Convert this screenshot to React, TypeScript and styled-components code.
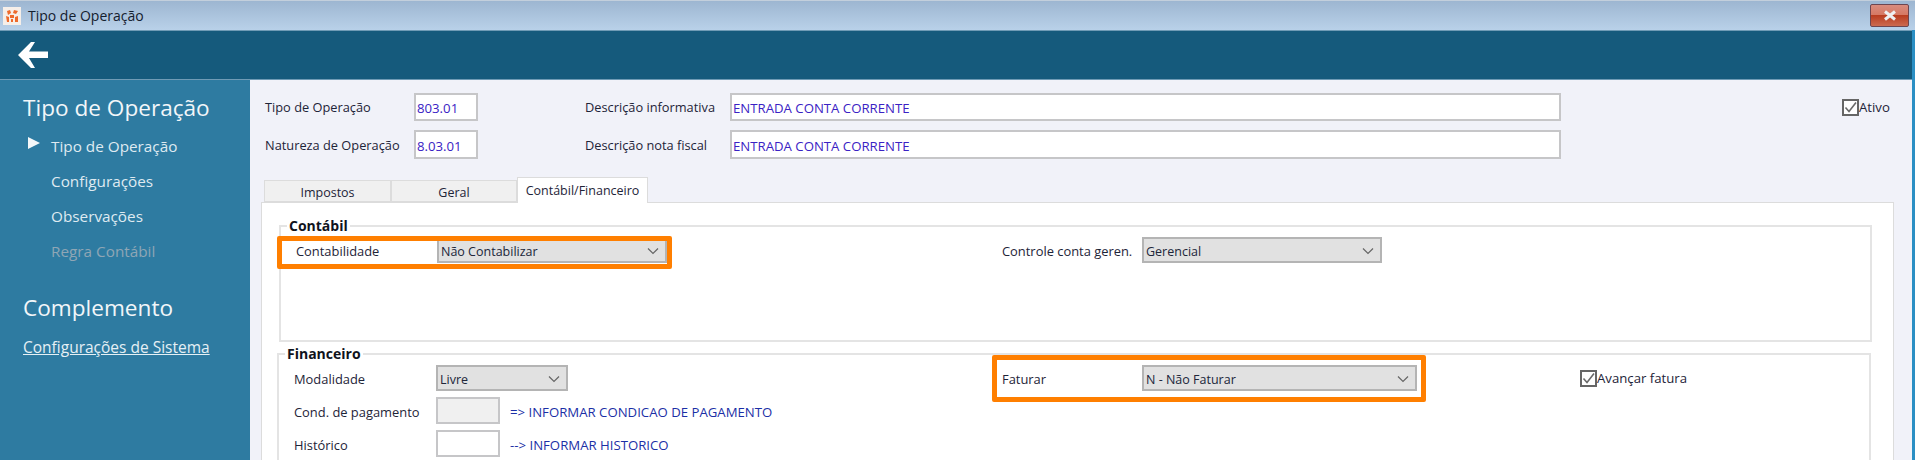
import React from "react";
import styled, { createGlobalStyle } from "styled-components";

const Global = createGlobalStyle`
  html, body { margin: 0; padding: 0; height: 100%; overflow: hidden; background: #b7cfe6; }
  * { box-sizing: border-box; }
  body { font-family: "Open Sans", "Noto Sans", "Liberation Sans", sans-serif; font-size: 13px; color: #1e2438; }
`;

const Window = styled.div`
  position: relative; width: 1915px; height: 460px; display: flex; flex-direction: column; overflow: hidden;
  background: linear-gradient(#9cb5d0, #b9d1e9 30px, #2b8fc4 30px, #2b8fc4 100%);
`;
const TitleBar = styled.header`
  height: 30px; display: flex; align-items: center; padding: 0 6px 0 3px; gap: 7px; flex: none;
  border-top: 1px solid #c3cfdc;
`;
const TitleText = styled.span`font-size: 14px; color: #14202e; flex: 1;`;
const AppLogo = styled.svg`width: 18px; height: 18px; flex: none; margin-top: 1px;`;
const CloseButton = styled.button`
  width: 39px; height: 23px; padding: 0; display: flex; align-items: center; justify-content: center;
  border: 1px solid #6d4650; border-radius: 2px;
  background: linear-gradient(#d98c7e, #d67964 46%, #b93d20 50%, #cc6a4f);
`;
const Frame = styled.div`
  flex: 1; min-height: 0; margin-right: 3px; display: flex; flex-direction: column;
`;
const Toolbar = styled.div`
  height: 50px; flex: none; background: #155a7c; display: flex; align-items: center; padding-left: 18px;
  border-top: 1px solid #6f9bb5; border-bottom: 1px solid #6f9bb5;
`;
const Body = styled.div`flex: 1; min-height: 0; display: flex;`;
const Sidebar = styled.nav`
  width: 250px; flex: none; background: #2e7ba1; padding: 12px 0 0 23px; color: #e4eef4;
`;
const SideTitle = styled.h2<{ $top?: number }>`
  margin: ${p => p.$top ?? 0}px 0 0; font-size: 22.6px; font-weight: 400; line-height: 32px; color: #f2f6f9;
`;
const SideItem = styled.div<{ $muted?: boolean }>`
  position: relative; height: 35px; display: flex; align-items: center; padding-left: 28px; font-size: 15.3px;
  color: ${p => (p.$muted ? "#8fa6b5" : "#dfeaf1")};
`;
const Marker = styled.span`
  position: absolute; left: 5px; top: 9px; width: 0; height: 0;
  border-left: 12px solid #f4f7f9; border-top: 6px solid transparent; border-bottom: 6px solid transparent;
`;
const SideItems = styled.div`margin-top: 4px;`;
const SideLink = styled.a`
  display: inline-block; margin-top: 12px; font-size: 15.5px; color: #e6f0f5; text-decoration: underline;
`;
const Content = styled.main`
  flex: 1; min-width: 0; background: #f1f2f9; padding: 13px 0 0 11px; overflow: hidden;
`;
const HeadGrid = styled.div`
  display: grid; grid-template-columns: 149px 64px 252px 831px 281px auto;
  grid-template-rows: 28px 29px; row-gap: 9px; align-items: center; padding-left: 4px;
`;
const HeadLabel = styled.label<{ $indent?: boolean }>`
  font-size: 12.8px; padding-left: ${p => (p.$indent ? "107px" : "0")}; white-space: nowrap;
`;
const TextBox = styled.div<{ $fill?: string }>`
  height: 100%; display: flex; align-items: center; padding: 2px 0 0 1px; font-size: 13.2px; color: #3a22c4;
  background: ${p => p.$fill ?? "#fff"}; border: 2px solid #c6c6c8; white-space: nowrap;
`;
const Check = styled.label`display: flex; align-items: center; gap: 0; font-size: 13.2px; white-space: nowrap;`;
const CheckBox = styled.span`
  width: 17px; height: 17px; display: flex; align-items: center; justify-content: center; background: #fff;
  border: 2px solid #666;
`;
const Tabs = styled.div`display: flex; align-items: flex-end; height: 25px; margin-top: 18px; padding-left: 3px;`;
const Tab = styled.div<{ $active?: boolean; $w: number }>`
  width: ${p => p.$w}px; height: ${p => (p.$active ? "26px" : "22px")}; display: flex; align-items: center; justify-content: center;
  padding-top: ${p => (p.$active ? "0" : "3px")};
  font-size: 12.5px; background: ${p => (p.$active ? "#fff" : "#f0f0f0")}; border: 1px solid #dcdcdc;
  border-bottom: ${p => (p.$active ? "none" : "1px solid #dcdcdc")}; margin-bottom: ${p => (p.$active ? "-1px" : "0")};
  position: relative; z-index: ${p => (p.$active ? 1 : 0)};
`;
const Panel = styled.div`
  position: relative; width: 1633px; height: 300px; background: #fff; border: 1px solid #dcdcdc;
  padding: 14px 0 0 15px;
`;
const Group = styled.fieldset<{ $h: number; $w: number; $shift?: number; $mt?: number }>`
  margin: ${p => p.$mt ?? 0}px 0 0 ${p => p.$shift ?? 0}px; padding: 0 0 0 15px; min-width: 0; width: ${p => p.$w}px; height: ${p => p.$h}px;
  border: 2px solid #e4e4e4;
`;
const Legend = styled.legend`
  margin-left: -9px; padding: 0 2px; font-size: 14px; font-weight: 700; line-height: 17px; color: #10131c;
`;
const AccountingGrid = styled.div`
  display: grid; grid-template-columns: 141px 230px 335px 140px 240px; grid-template-rows: 26px; align-items: center; margin-top: 3px;
`;
const FinanceGrid = styled.div`
  display: grid; grid-template-columns: 142px 132px 434px 140px 275px 163px auto;
  grid-template-rows: 26px 27px 27px; row-gap: 6px; align-items: center; margin-top: 3px;
`;
const Label = styled.label`font-size: 12.9px; white-space: nowrap; margin-top: 2px;`;
const SelectBox = styled.div`
  height: 100%; display: flex; align-items: center; justify-content: space-between; padding: 2px 6px 0 2px;
  font-size: 12.5px; color: #20263a; background: #e1e1e1; border: 2px solid #b4b4b4; white-space: nowrap;
`;
const EmptySlot = styled.span``;
const NoteCell = styled.div`grid-column: 2 / -1; height: 100%; display: flex; align-items: center; gap: 10px;`;
const SmallBox = styled(TextBox)`width: 64px; flex: none;`;
const Note = styled.span`font-size: 13.2px; color: #1b2fa6; white-space: nowrap; padding-top: 2px;`;
const Highlight = styled.div<{ $x: number; $y: number; $w: number; $h: number }>`
  position: absolute; left: ${p => p.$x}px; top: ${p => p.$y}px; width: ${p => p.$w}px; height: ${p => p.$h}px;
  border: 5px solid #ff7f00; border-radius: 2px; pointer-events: none;
`;

const Chevron = () => (
  <svg width="12" height="8" viewBox="0 0 12 8" fill="none"><path d="M1 1.5 6 6.5 11 1.5" stroke="#666" strokeWidth="1.2" /></svg>
);
const Tick = () => (
  <svg width="13" height="13" viewBox="0 0 13 13" fill="none"><path d="M1.5 6.5 5 10.5 12 1.5" stroke="#6a6a6a" strokeWidth="1.6" /></svg>
);

export default function App() {
  return (
    <>
      <Global />
      <Window>
        <TitleBar>
          <AppLogo viewBox="0 0 18 18">
            <rect width="18" height="18" fill="#f6efe9" />
            <path d="M4 4 7 3 8 6 5 8ZM11 3 15 4 13 7 10 6ZM7 8 11 8 11 11 7 11ZM3 9 6 10 6 15 4 15ZM12 10 15 9 15 15 12 15ZM8 12 10 12 10 15 8 15Z" fill="#ee6a2c" />
          </AppLogo>
          <TitleText>Tipo de Operação</TitleText>
          <CloseButton aria-label="Fechar">
            <svg width="14" height="11" viewBox="0 0 14 11"><path d="M2 1.5 12 9.5M12 1.5 2 9.5" stroke="#eef0f2" strokeWidth="3" /></svg>
          </CloseButton>
        </TitleBar>
        <Frame>
          <Toolbar>
            <svg width="30" height="26" viewBox="0 0 30 26"><path d="M0 13 13 0 17 0 11 9.5 30 9.5 30 16 11 16 17 26 13 26Z" fill="#fff" /></svg>
          </Toolbar>
          <Body>
            <Sidebar>
              <SideTitle>Tipo de Operação</SideTitle>
              <SideItems>
                <SideItem><Marker />Tipo de Operação</SideItem>
                <SideItem>Configurações</SideItem>
                <SideItem>Observações</SideItem>
                <SideItem $muted>Regra Contábil</SideItem>
              </SideItems>
              <SideTitle $top={24}>Complemento</SideTitle>
              <SideLink>Configurações de Sistema</SideLink>
            </Sidebar>
            <Content>
              <HeadGrid>
                <HeadLabel>Tipo de Operação</HeadLabel>
                <TextBox>803.01</TextBox>
                <HeadLabel $indent>Descrição informativa</HeadLabel>
                <TextBox>ENTRADA CONTA CORRENTE</TextBox>
                <EmptySlot />
                <Check><CheckBox><Tick /></CheckBox>Ativo</Check>
                <HeadLabel>Natureza de Operação</HeadLabel>
                <TextBox>8.03.01</TextBox>
                <HeadLabel $indent>Descrição nota fiscal</HeadLabel>
                <TextBox>ENTRADA CONTA CORRENTE</TextBox>
              </HeadGrid>
              <Tabs>
                <Tab $w={127}>Impostos</Tab>
                <Tab $w={126}>Geral</Tab>
                <Tab $w={131} $active>Contábil/Financeiro</Tab>
              </Tabs>
              <Panel>
                <Group $h={125} $w={1593} $shift={2}>
                  <Legend>Contábil</Legend>
                  <AccountingGrid>
                    <Label>Contabilidade</Label>
                    <SelectBox>Não Contabilizar<Chevron /></SelectBox>
                    <EmptySlot />
                    <Label>Controle conta geren.</Label>
                    <SelectBox>Gerencial<Chevron /></SelectBox>
                  </AccountingGrid>
                </Group>
                <Group $h={140} $w={1594} $mt={3}>
                  <Legend>Financeiro</Legend>
                  <FinanceGrid>
                    <Label>Modalidade</Label>
                    <SelectBox>Livre<Chevron /></SelectBox>
                    <EmptySlot />
                    <Label>Faturar</Label>
                    <SelectBox>N - Não Faturar<Chevron /></SelectBox>
                    <EmptySlot />
                    <Check><CheckBox><Tick /></CheckBox>Avançar fatura</Check>
                    <Label>Cond. de pagamento</Label>
                    <NoteCell><SmallBox $fill="#f0f0f0" /><Note>=&gt; INFORMAR CONDICAO DE PAGAMENTO</Note></NoteCell>
                    <Label>Histórico</Label>
                    <NoteCell><SmallBox /><Note>--&gt; INFORMAR HISTORICO</Note></NoteCell>
                  </FinanceGrid>
                </Group>
              </Panel>
            </Content>
          </Body>
        </Frame>
        <Highlight $x={277} $y={236} $w={395} $h={33} />
        <Highlight $x={992} $y={355} $w={434} $h={47} />
      </Window>
    </>
  );
}
